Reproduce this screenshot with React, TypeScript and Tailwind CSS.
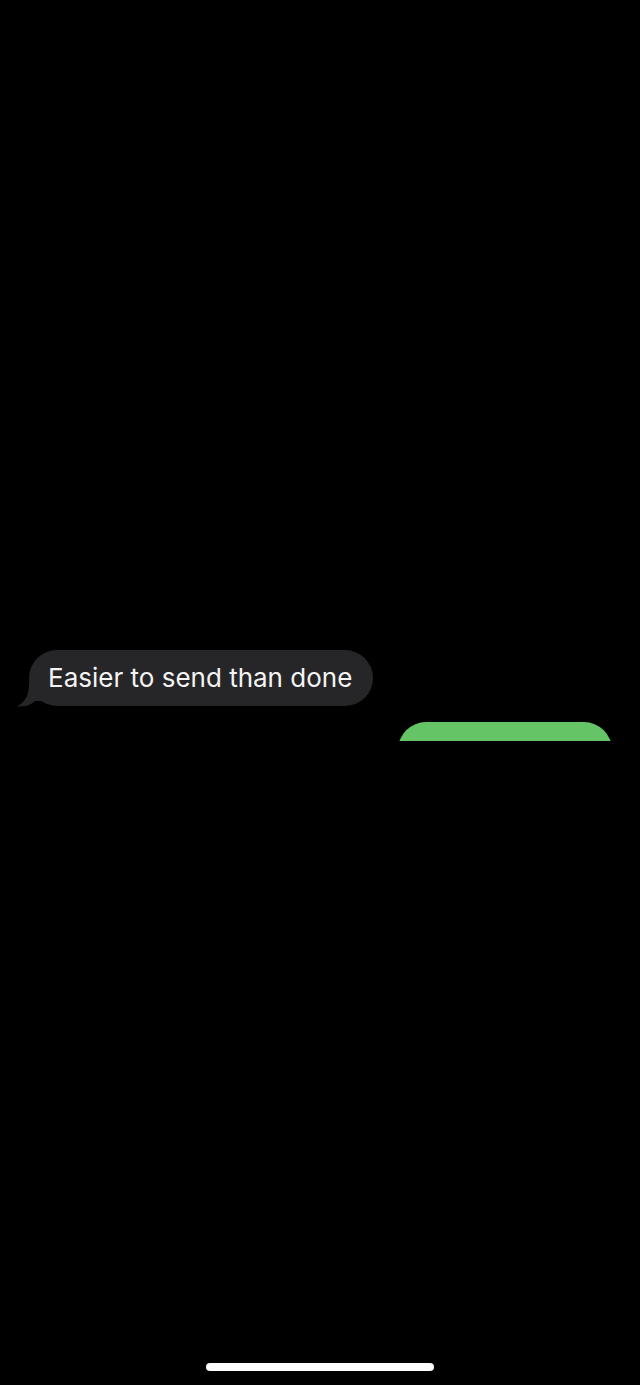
export default function App() {
  return (
    <div className="h-[1385px] w-[640px] bg-black flex flex-col overflow-hidden" style={{ fontFamily: 'Inter, "Noto Sans", sans-serif' }}>
      <div className="pt-[650px] flex flex-col">
        <div className="relative self-start ml-[29px]">
          <div className="h-[56px] rounded-full bg-[#262628] pl-[19px] pr-[21px] flex items-center">
            <span className="text-[26px] leading-none text-[#f4f4f4] whitespace-nowrap">Easier to send than done</span>
          </div>
          <svg className="absolute left-[-12px] bottom-[-1px]" width="30" height="24" viewBox="0 0 30 24">
            <path d="M12 0 C12 10 10 18 0 23.5 C8 24 14 22 18 18 L30 18 L30 0 Z" fill="#262628" />
          </svg>
        </div>
        <div className="self-end mr-[28px] mt-[16px] h-[19px] overflow-hidden">
          <div className="h-[56px] w-[214px] rounded-full bg-[#65c466] flex items-center pl-[20px]">
            <span className="text-[26px] leading-none text-white whitespace-nowrap">&nbsp;</span>
          </div>
        </div>
      </div>
      <div className="flex-1" />
      <div className="flex justify-center pb-[14px]">
        <div className="h-[8px] w-[228px] rounded-full bg-white" />
      </div>
    </div>
  );
}
